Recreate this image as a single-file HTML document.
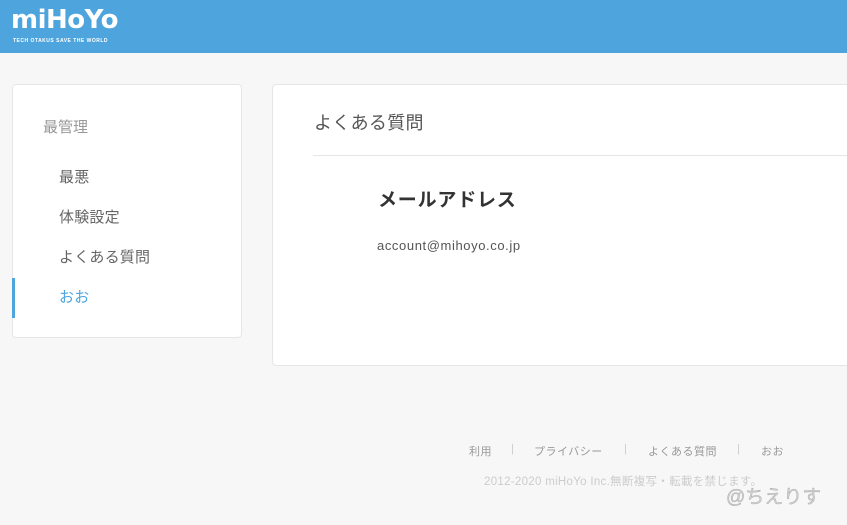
<!DOCTYPE html>
<html><head><meta charset="utf-8"><style>
*{margin:0;padding:0;box-sizing:border-box}
body{width:847px;height:525px;background:#f7f7f7;font-family:"Liberation Sans","Noto Sans CJK JP",sans-serif;position:relative;overflow:hidden}
.hdr{position:absolute;left:0;top:0;width:847px;height:53px;background:#4ea5de}
.logo{position:absolute;left:11px;top:5px;color:#fff;font-weight:bold;font-size:26px;letter-spacing:-0.5px;font-family:"DejaVu Sans",sans-serif}
.tag{position:absolute;left:13px;top:38px;color:#fff;font-size:5px;letter-spacing:0.5px;font-weight:bold}
.card{position:absolute;background:#fff;border:1px solid #e6e6e6;border-radius:4px}
.l{left:12px;top:84px;width:230px;height:254px}
.r{left:272px;top:84px;width:590px;height:282px}
.t{position:absolute;font-size:15px;color:#999}
.it{position:absolute;left:46px;font-size:15px;color:#666;letter-spacing:0.2px}
.f{position:absolute;top:443px;font-size:11px;color:#999;letter-spacing:0.5px}
</style></head><body>
<div class="hdr"><div class="logo">miHoYo</div><div class="tag">TECH OTAKUS SAVE THE WORLD</div></div>
<div class="card l">
<div class="t" style="left:30px;top:31px">最管理</div>
<div class="it" style="top:81px">最悪</div>
<div class="it" style="top:121px">体験設定</div>
<div class="it" style="top:161px">よくある質問</div>
<div class="it" style="top:201px;color:#4ea5de">おお</div>
<div style="position:absolute;left:-1px;top:193px;width:3px;height:40px;background:#4ea5de"></div>
</div>
<div class="card r">
<div style="position:absolute;left:41px;top:24px;font-size:18px;color:#555;letter-spacing:0.3px">よくある質問</div>
<div style="position:absolute;left:40px;top:70px;right:0;height:1px;background:#e6e6e6"></div>
<div style="position:absolute;left:105px;top:100px;font-size:19px;font-weight:bold;color:#333;letter-spacing:0.8px">メールアドレス</div>
<div style="position:absolute;left:104px;top:153px;font-size:13px;color:#555;letter-spacing:0.6px">account@mihoyo.co.jp</div>
</div>
<div class="f" style="left:469px">利用</div>
<div class="f" style="left:511px;color:#ccc">|</div>
<div class="f" style="left:534px">プライバシー</div>
<div class="f" style="left:624px;color:#ccc">|</div>
<div class="f" style="left:648px">よくある質問</div>
<div class="f" style="left:737px;color:#ccc">|</div>
<div class="f" style="left:761px">おお</div>
<div style="position:absolute;left:484px;top:473px;font-size:11.5px;color:#ccc;letter-spacing:0.3px">2012-2020 miHoYo Inc.無断複写・転載を禁じます。</div>
<div style="position:absolute;left:726px;top:482px;font-size:19px;color:#d0d0d0;-webkit-text-stroke:0.3px #999">@ちえりす</div>
</body></html>
